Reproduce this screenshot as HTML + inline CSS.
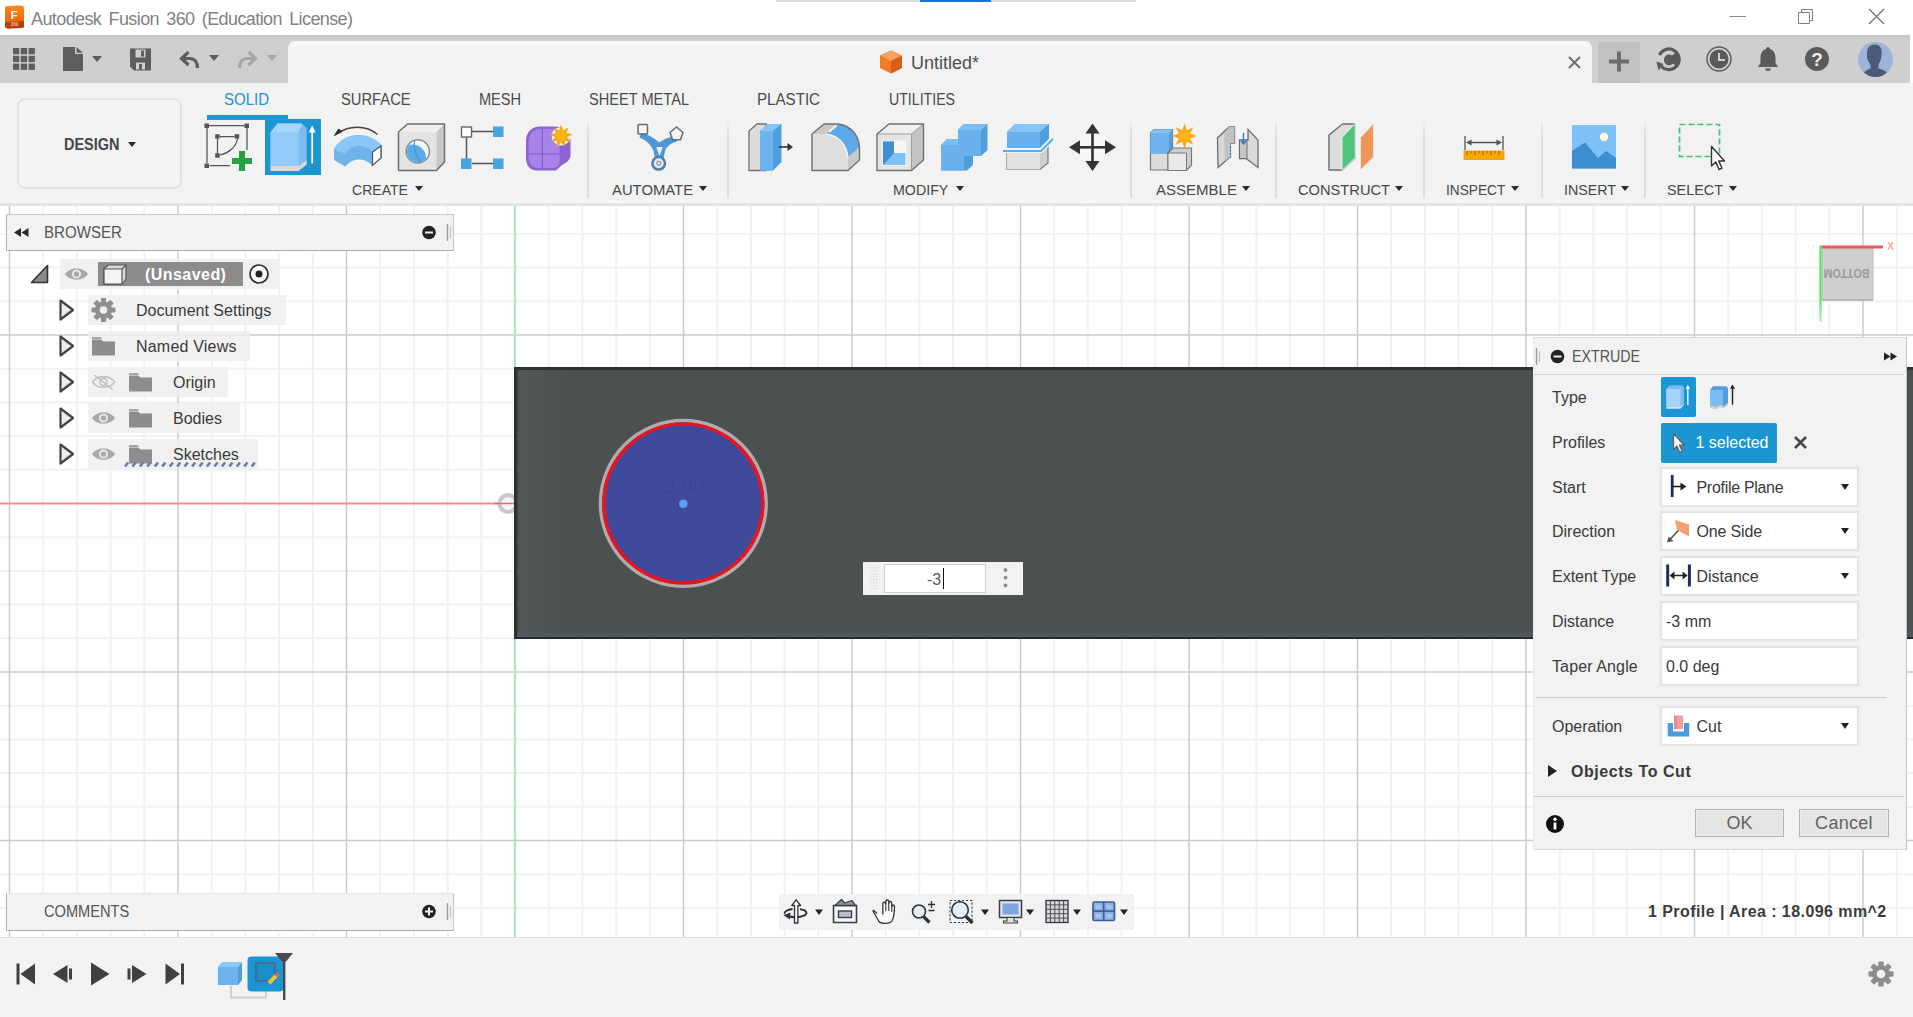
<!DOCTYPE html>
<html lang="en">
<head>
<meta charset="utf-8">
<title>Autodesk Fusion 360 (Education License)</title>
<style>
*{box-sizing:border-box;margin:0;padding:0}
html,body{width:1913px;height:1017px;overflow:hidden;background:#fff}
body{position:relative;font-family:"Liberation Sans",Arial,sans-serif;color:#3c3c3c}
.abs{position:absolute}
.t{position:absolute;white-space:nowrap;line-height:1}
svg{position:absolute;overflow:visible}
/* title bar */
#titlebar{position:absolute;left:0;top:0;width:1913px;height:35px;background:#fff}
#graybar{position:absolute;left:0;top:35px;width:1910px;height:48px;background:#cfcfcf}
#graybar:before{content:"";position:absolute;left:0;top:0;width:100%;height:5px;background:linear-gradient(#c6c6c6,#cfcfcf)}
#doctab{position:absolute;left:288px;top:41px;width:1304px;height:43px;background:linear-gradient(#f6f6f6 0,#f6f6f6 4px,#f2f2f2 6px,#f2f2f2 100%);border-radius:7px 7px 0 0}
#toolbar{position:absolute;left:0;top:83px;width:1913px;height:121px;background:linear-gradient(#f2f2f2 0,#f2f2f2 117px,#f6f6f6 118px,#f6f6f6 100%)}
#tbshadow{position:absolute;left:0;top:203px;width:1913px;height:5px;background:linear-gradient(#e9e9e9 0,#e2e2e2 25%,#e4e4e4 60%,#f8f8f8 100%)}
.tab{position:absolute;top:92px;font-size:16px;line-height:16px;color:#4a4a4a;white-space:nowrap;transform-origin:0 0}
.grp{position:absolute;top:182px;font-size:15.500px;line-height:15.500px;color:#484848;white-space:nowrap;transform-origin:0 0}
.ga{position:absolute;top:186px;width:0;height:0;border-left:4px solid transparent;border-right:4px solid transparent;border-top:5px solid #2a2a2a}
.sep{position:absolute;top:120px;width:2px;height:78px;background:linear-gradient(rgba(220,220,220,0) 0,#dedede 12px,#dedede 100%)}
/* canvas */
#canvas{position:absolute;left:0;top:206px;width:1913px;height:731px;background:#fff;overflow:hidden}
#bottombar{position:absolute;left:0;top:937px;width:1913px;height:80px;background:#f2f2f2;border-top:1px solid #dcdcdc}
/* browser */
.phead{position:absolute;background:#f2f2f2;border:1px solid;border-color:#cacaca #c4c4c4 #adadad #b6b6b6}
.rowbg{position:absolute;height:30px;background:rgba(238,238,238,.85)}
.lbl{position:absolute;font-size:16px;line-height:16px;color:#3a3a3a;white-space:nowrap}
/* dialog */
#dlg{position:absolute;left:1533px;top:337px;width:374px;height:513px;background:#f2f2f2;border:1px solid;border-color:#d8d8d8 #c4c4c4 #d8d8d8 #ececec}
.dl{position:absolute;left:18px;font-size:16px;line-height:16px;color:#3a3a3a;white-space:nowrap}
.dd{position:absolute;left:127px;width:197px;height:38px;background:#fff;border:1px solid #e0e0e0;box-shadow:0 0 0 1.500px #e8e8e8}
.dd span{position:absolute;left:34.500px;top:11px;font-size:16px;line-height:16px;color:#3a3a3a;white-space:nowrap}
.dd i{position:absolute;right:8.500px;top:15px;width:0;height:0;border-left:4.5px solid transparent;border-right:4.5px solid transparent;border-top:6px solid #222}
.btn{position:absolute;top:470px;height:28px;background:#e5e5e5;border:1px solid #b2b2b2;box-shadow:inset 0 0 0 1px #ededed;font-size:18px;line-height:27px;text-align:center;color:#626262}
</style>
</head>
<body>
<!-- ===== TITLE BAR ===== -->
<div id="titlebar">
  <div class="abs" style="left:776px;top:0;width:360px;height:2px;background:#dcdcdc"></div>
  <div class="abs" style="left:920px;top:0;width:71px;height:2px;background:#1a73d2"></div>
  <svg style="left:4px;top:5px" width="21" height="24" viewBox="0 0 21 24">
    <defs><linearGradient id="fg" x1="0" y1="0" x2="0" y2="1"><stop offset="0" stop-color="#ff8a1c"/><stop offset="1" stop-color="#e2560a"/></linearGradient></defs>
    <path d="M3 1 L17 0.5 Q20 0.5 20 3 L20 21 Q20 23.5 17 23 L4 23.5 Q1 23.5 1 20 L1 4 Q1 1 3 1Z" fill="url(#fg)"/>
    <path d="M1 17 L20 16 L20 21 Q20 23.5 17 23 L4 23.5 Q1 23.5 1 20Z" fill="#b9400a"/>
    <text x="10" y="13.5" font-family="Liberation Sans,sans-serif" font-weight="700" font-size="11" fill="#fff" text-anchor="middle">F</text>
    <text x="10.5" y="21.3" font-family="Liberation Sans,sans-serif" font-weight="700" font-size="4.5" fill="#f6b98c" text-anchor="middle">360</text>
  </svg>
  <div class="t" style="left:31px;top:10px;font-size:18px;letter-spacing:-.6px;word-spacing:2.900px;color:#828282">Autodesk Fusion 360 (Education License)</div>
  <!-- window controls -->
  <svg style="left:1725px;top:5px" width="170" height="26" viewBox="0 0 170 26" fill="none" stroke="#7a7a7a" stroke-width="1">
    <path d="M4.500 11.500H21" stroke="#8a8a8a"/>
    <path d="M73.500 7.500H84.500V18.500H73.500Z M76.500 7.500V4.500H87.500V15.500H84.500" stroke="#808080"/>
    <path d="M144 4L159 19M159 4L144 19" stroke="#6e6e6e" stroke-width="1.200"/>
  </svg>
</div>
<!-- ===== GRAY QUICK BAR ===== -->
<div id="graybar"></div>
<div id="doctab"></div>
<svg style="left:0;top:35px" width="300" height="48" viewBox="0 0 300 48" fill="#5d5d5d">
  <!-- app grid -->
  <g>
    <rect x="13" y="13" width="6.300" height="6.300"/><rect x="20.800" y="13" width="6.300" height="6.300"/><rect x="28.600" y="13" width="6.300" height="6.300"/>
    <rect x="13" y="20.800" width="6.300" height="6.300"/><rect x="20.800" y="20.800" width="6.300" height="6.300"/><rect x="28.600" y="20.800" width="6.300" height="6.300"/>
    <rect x="13" y="28.600" width="6.300" height="6.300"/><rect x="20.800" y="28.600" width="6.300" height="6.300"/><rect x="28.600" y="28.600" width="6.300" height="6.300"/>
  </g>
  <!-- file -->
  <path d="M63 12H75V19H83V36H63Z M76.500 12L83 17.800H76.500Z"/>
  <path d="M92 21H102L97 27Z"/>
  <!-- save -->
  <path d="M130 13.500H151V35.500H134L130 31.500Z" />
  <rect x="135.500" y="14.500" width="10" height="8" fill="#cfcfcf"/><rect x="141" y="15.500" width="3" height="6" fill="#5d5d5d"/>
  <rect x="136" y="27.500" width="9" height="7" fill="#cfcfcf"/><rect x="139" y="29" width="3" height="6" fill="#5d5d5d"/>
  <!-- undo -->
  <path d="M188.500 17L181.500 23.500L188.500 30M182 23.500H189.500C195 23.500 197.500 27.500 197.500 33" fill="none" stroke="#5d5d5d" stroke-width="3.200"/>
  <path d="M209 20H219L214 26Z"/>
  <!-- redo (disabled) -->
  <g fill="#a6a6a6"><path d="M248.500 17L255.500 23.500L248.500 30M255 23.500H247.500C242 23.500 239.500 27.500 239.500 33" fill="none" stroke="#a6a6a6" stroke-width="3.200"/>
  <path d="M267 20H277L272 26Z"/></g>
</svg>
<!-- doc tab content -->
<svg style="left:878px;top:49px" width="26" height="26" viewBox="0 0 26 26">
  <path d="M13 1.500L24 6.500V19L13 24.500L2 19V6.500Z" fill="#f47c20"/>
  <path d="M13 1.500L24 6.500L13 12L2 6.500Z" fill="#fba35c"/>
  <path d="M13 12L24 6.500V19L13 24.500Z" fill="#d9601a"/>
</svg>
<div class="t" style="left:911px;top:54px;font-size:18px;color:#4f4f4f">Untitled*</div>
<svg style="left:1568px;top:56px" width="13" height="13" viewBox="0 0 13 13" stroke="#6a6a6a" stroke-width="1.800" fill="none"><path d="M1 1L12 12M12 1L1 12"/></svg>
<div class="abs" style="left:1598px;top:42px;width:42px;height:41px;background:#c1c1c1;border-radius:3px 3px 0 0"></div>
<svg style="left:1598px;top:35px" width="315" height="48" viewBox="0 0 315 48">
  <path d="M11 26.500H31M21 16.500V36.500" stroke="#6c6c6c" stroke-width="4" fill="none"/>
  <!-- extensions/job status -->
  <g transform="translate(71,24)">
    <path d="M-7.500 7.500A10.300 10.300 0 1 0 -9.500 -4" fill="none" stroke="#5a5a5a" stroke-width="3.200"/>
    <path d="M-12.500 2.500L-5.500 5L-10.500 11.500Z" fill="#5a5a5a"/>
    <path d="M8 -7.500L3 -3.500C0 -6 -5 -4 -5 1C-5 6 1 8 4 4.500L8.500 8C12 3 12 -3 8 -7.500Z" fill="#5a5a5a"/>
  </g>
  <!-- clock -->
  <g transform="translate(121,24)">
    <circle r="12" fill="none" stroke="#5a5a5a" stroke-width="1.400"/>
    <circle r="9.500" fill="#5a5a5a"/>
    <path d="M0 -6V1H6" stroke="#cfcfcf" stroke-width="2" fill="none"/>
  </g>
  <!-- bell -->
  <g transform="translate(170,24)" fill="#5a5a5a">
    <path d="M0 -12C1.500 -12 2 -11 2 -10C6 -9 7.500 -5 7.500 -1V4L10 8H-10L-7.500 4V-1C-7.500 -5 -6 -9 -2 -10C-2 -11 -1.500 -12 0 -12Z"/>
    <path d="M-3 9.500H3C3 11 1.500 12 0 12S-3 11 -3 9.500Z"/>
  </g>
  <!-- help -->
  <g transform="translate(219,24)">
    <circle r="12" fill="#5a5a5a"/>
    <text x="0" y="6.500" text-anchor="middle" font-family="Liberation Sans,sans-serif" font-weight="700" font-size="19" fill="#efefef">?</text>
  </g>
  <!-- avatar -->
  <g transform="translate(277.500,24.500)">
    <defs><clipPath id="avc"><circle r="17.500"/></clipPath></defs>
    <circle r="17.500" fill="#9db4d6"/>
    <g clip-path="url(#avc)">
      <path d="M-1 -15C5 -15 7 -10 6 -5C6 0 4 3 3 5V9C8 10 12 12 14 18H-14C-12 12 -8 10 -5 9V5C-7 3 -9 -1 -8.500 -6C-8.500 -11 -6 -15 -1 -15Z" fill="#4a5a78"/>
    </g>
  </g>
</svg>
<!-- ===== TOOLBAR ===== -->
<div id="toolbar"></div>
<div id="tbshadow"></div>
<div class="tab" style="left:224px;transform:scaleX(0.938);color:#1b96d3">SOLID</div>
<div class="tab" style="left:341px;transform:scaleX(0.921);">SURFACE</div>
<div class="tab" style="left:479px;transform:scaleX(0.909);">MESH</div>
<div class="tab" style="left:589px;transform:scaleX(0.912);">SHEET METAL</div>
<div class="tab" style="left:757px;transform:scaleX(0.945);">PLASTIC</div>
<div class="tab" style="left:889px;transform:scaleX(0.884);">UTILITIES</div>
<div class="abs" style="left:207px;top:114.500px;width:81px;height:5px;background:#1b96d3"></div>
<div class="abs" style="left:265px;top:119px;width:56px;height:56px;background:#1b96d3"></div>
<!-- DESIGN button -->
<div class="abs" style="left:17px;top:98px;width:165px;height:91px;border:2px solid #e2e2e2;border-radius:8px;background:#f3f3f3"></div>
<div class="t" style="left:63.500px;top:137px;font-size:16px;font-weight:700;color:#474747;transform:scaleX(.905);transform-origin:0 0">DESIGN</div>
<div class="abs" style="left:128px;top:142px;width:0;height:0;border-left:4px solid transparent;border-right:4px solid transparent;border-top:5px solid #2a2a2a"></div>
<!-- separators -->
<div class="sep" style="left:587px"></div><div class="sep" style="left:727px"></div><div class="sep" style="left:1130px"></div>
<div class="sep" style="left:1275px"></div><div class="sep" style="left:1423px"></div><div class="sep" style="left:1541px"></div><div class="sep" style="left:1644px"></div>
<!-- group labels -->
<div class="grp" style="left:352.0px;transform:scaleX(0.907)">CREATE</div><i class="ga" style="left:415px"></i>
<div class="grp" style="left:612.0px;transform:scaleX(0.957)">AUTOMATE</div><i class="ga" style="left:699px"></i>
<div class="grp" style="left:893.0px;transform:scaleX(0.918)">MODIFY</div><i class="ga" style="left:956px"></i>
<div class="grp" style="left:1156.0px;transform:scaleX(0.969)">ASSEMBLE</div><i class="ga" style="left:1242px"></i>
<div class="grp" style="left:1297.5px;transform:scaleX(0.946)">CONSTRUCT</div><i class="ga" style="left:1395px"></i>
<div class="grp" style="left:1446.0px;transform:scaleX(0.883)">INSPECT</div><i class="ga" style="left:1511px"></i>
<div class="grp" style="left:1563.5px;transform:scaleX(0.919)">INSERT</div><i class="ga" style="left:1621px"></i>
<div class="grp" style="left:1667.0px;transform:scaleX(0.928)">SELECT</div><i class="ga" style="left:1729px"></i>
<!-- ===== TOOL ICONS (CREATE / AUTOMATE) ===== -->
<svg style="left:0;top:83px" width="730" height="120" viewBox="0 83 730 120">
  <!-- create sketch -->
  <g stroke="#555" stroke-width="1.250" fill="none">
    <path d="M209 125.500H244.500M207 128V163M247 128V150M209.500 165.500H230"/>
    <path d="M220 136.500H234.500M217.500 139V153M220 155C229 153 236 147 237.500 139"/>
  </g>
  <g fill="#555"><rect x="204.500" y="123.500" width="4.500" height="4.500"/><rect x="244.500" y="123.500" width="4.500" height="4.500"/><rect x="204.500" y="163.500" width="4.500" height="4.500"/>
  <rect x="215.200" y="134.200" width="4.500" height="4.500"/><rect x="234.700" y="134.200" width="4.500" height="4.500"/><rect x="215.200" y="153.200" width="4.500" height="4.500"/></g>
  <path d="M239 151H245V158H252V164H245V171H239V164H232V158H239Z" fill="#25a244"/>
  <!-- extrude (selected) -->
  <path d="M270.500 132.500L277.500 123.500H302L306.700 128V160L298.600 166H270.500Z" fill="#7dbcf0"/>
  <path d="M270.500 132.500H298.600V166H270.500Z" fill="#93cbf7"/>
  <path d="M270.500 132.500L277.500 123.500H302L298.600 132.500Z" fill="#a6d6fb"/>
  <path d="M270.500 166H298.600L306.700 160V164.500L298.600 171H270.500Z" fill="#dcd8d6"/>
  <path d="M312.200 163.500V131" stroke="#fff" stroke-width="1.700"/><path d="M308.700 132.500L312.200 125.500L315.700 132.500Z" fill="#fff"/>
  <!-- revolve -->
  <path d="M334 149C344 132 368 130 382 146V158L372.500 165.500C364 157 352 158 345.500 166.500L334 160Z" fill="#6fb3ea"/>
  <path d="M334 149C344 132 368 130 382 146L372.500 152C364 143 352 144 345.500 154Z" fill="#8ac6f6"/>
  <path d="M372.500 152L381 146V158L372.500 165.500Z" fill="#fff" stroke="#555" stroke-width="1.200"/>
  <path d="M338 133.500C348 125.500 366 124.500 377.500 134.500" stroke="#444" stroke-width="1.400" fill="none"/><path d="M334.500 135.500L342 131.500L338.500 129Z" fill="#333" stroke="#333"/>
  <!-- hole -->
  <path d="M398.500 132L407.500 124H444.500V162L436.500 170.500H398.500Z" fill="#e3e3e3"/>
  <path d="M398.500 132L407.500 124H444.500L436.500 132Z" fill="#efefef"/>
  <path d="M436.500 132L444.500 124V162L436.500 170.500Z" fill="#c9c9c9"/>
  <path d="M398.500 132L407.500 124H444.500V162L436.500 170.500H398.500Z" fill="none" stroke="#6c6c6c" stroke-width="1.500" stroke-linejoin="round"/>
  <clipPath id="hc"><circle cx="417.800" cy="151.400" r="10.800"/></clipPath>
  <circle cx="417.800" cy="151.400" r="11.600" fill="#f7f7f7" stroke="#8a8a8a" stroke-width="1.400"/>
  <g clip-path="url(#hc)"><circle cx="412.500" cy="158" r="13.500" fill="#5aaae8"/><path d="M414.500 141C413.500 148 416 157 421 162" stroke="#4a98dc" stroke-width="1.200" fill="none"/></g>
  <!-- pattern -->
  <g stroke="#555" stroke-width="1.500" fill="none"><path d="M472 131.500H493M466.500 137V159M472 163.500H493"/></g>
  <rect x="461.500" y="127" width="10" height="10" fill="#fff" stroke="#666" stroke-width="1.400"/>
  <rect x="493" y="126.500" width="10.500" height="10.500" fill="#45a3e6"/><rect x="461" y="158.500" width="10.500" height="10.500" fill="#45a3e6"/><rect x="493" y="158.500" width="10.500" height="10.500" fill="#45a3e6"/>
  <!-- create form -->
  <path d="M526 141C526 132 532 126.500 540 126.500H556C564 127 570.500 133 570.500 141V155C570.500 160 566 163 562 165L556 170.500H538C530 170.500 526 166 526 158Z" fill="#8d63d2"/>
  <path d="M528.500 142C528.500 134 533.500 129 541 129H552C556.500 129 559.500 132 559.500 136V161C559.500 165.500 556 168 552 168H540C533 168 528.500 164 528.500 157Z" fill="#a884ea"/>
  <path d="M528.500 154H559.500M542.300 129V168" stroke="#7d55c4" stroke-width="1.100" fill="none"/>
  <circle cx="561.100" cy="136.200" r="9.300" fill="#f2f2f2"/>
  <path d="M561.1 124.4L563.2 130.6L568.7 127.2L566.3 133.2L572.7 134.2L567.0 137.2L571.3 142.1L565.0 140.8L565.1 147.3L561.1 142.2L557.1 147.3L557.2 140.8L550.9 142.1L555.2 137.2L549.5 134.2L555.9 133.2L553.5 127.2L559.0 130.6Z" fill="#f7a614"/>
  <circle cx="561.100" cy="136.200" r="5.200" fill="#fdb515"/>
  <!-- automate -->
  <path d="M641 132.500C648 134 654 138 659.300 142.500C664 139 669 137 675.500 136L677 141.500C670.500 143 666.500 146.500 665 151L663.500 158.500H655L653.500 151C651.500 145 646.500 140.500 639.500 137.500Z" fill="#4d97d4"/>
  <path d="M656.300 147H662.800L659.500 156Z" fill="#eef2f6"/>
  <rect x="638" y="124.500" width="9.500" height="9.500" rx="1" fill="#f5f5f5" stroke="#5f6a74" stroke-width="1.500"/>
  <path d="M676.500 127L683 132.500L680.500 139.800H672.500L670 132.500Z" fill="#f5f5f5" stroke="#5f6a74" stroke-width="1.500" stroke-linejoin="round"/>
  <circle cx="658.700" cy="163.300" r="6.300" fill="#e8e8e8" stroke="#4a80b0" stroke-width="2.500"/><circle cx="658.700" cy="163.300" r="2" fill="none" stroke="#777" stroke-width="1"/>
</svg>
<!-- ===== TOOL ICONS (MODIFY .. SELECT) ===== -->
<svg style="left:730px;top:83px" width="1183" height="120" viewBox="730 83 1183 120">
  <!-- press pull -->
  <path d="M749 131L757 124H766V170.500H749Z" fill="#dcdcdc" stroke="#707070" stroke-width="1.300"/>
  <path d="M760 131L768 124H781.500V162L773 170.500H760Z" fill="#4e9ee0"/>
  <path d="M760 131H773V170.500H760Z" fill="#6cb4ee"/>
  <path d="M760 131L768 124H781.500L773 131Z" fill="#86c4f5"/>
  <path d="M779 147H789" stroke="#333" stroke-width="1.600"/><path d="M787.500 143L793 147L787.500 151Z" fill="#333"/>
  <!-- fillet -->
  <path d="M812 134L824 124H838C852 126 859 136 859.500 148V160L848 170.500H812Z" fill="#c9c9c9"/>
  <path d="M812 134H826C840 136 847 146 848 158V170.500H812Z" fill="#dedede"/>
  <path d="M826 134L838 124C852 126 859 136 859.500 147L848 157C847 146 840 136 826 134Z" fill="#5ba9e8"/>
  <path d="M826 134C840 136 847 146 848 158" fill="none" stroke="#f4f4f4" stroke-width="1.400"/>
  <path d="M829 132L836.500 125.500" stroke="#f4f4f4" stroke-width="2.200"/>
  <path d="M812 134L824 124H838C852 126 859 136 859.500 148V160L848 170.500H812Z" fill="none" stroke="#707070" stroke-width="1.400" stroke-linejoin="round"/>
  <!-- shell -->
  <path d="M877 134L889 124H923.500V160L911.500 170.500H877Z" fill="#c4c4c4"/>
  <path d="M877 134L889 124H923.500L911.500 134Z" fill="#efefef"/>
  <path d="M877 134H911.500V170.500H877Z" fill="#e4e4e4"/>
  <path d="M877 134H911.500V170.500M911.500 134L923.500 124" fill="none" stroke="#9a9a9a" stroke-width="1"/>
  <path d="M877 134L889 124H923.500V160L911.500 170.500H877Z" fill="none" stroke="#707070" stroke-width="1.400" stroke-linejoin="round"/>
  <path d="M882 140.500H906.500V166H882Z" fill="#f5f5f5"/>
  <path d="M883 141.500H894V153H905.500V165H883Z" fill="#7fc1f5"/>
  <path d="M883 141.500H894V153L888 160L883 165Z" fill="#3f8fd2"/>
  <!-- combine -->
  <path d="M941 145L947 139H958V130L964 124H987.500V150L981 156H973V165L967 170.500H941Z" fill="#4e9ee0"/>
  <path d="M941 145H964V170.500H941Z M958 130H981V156H964V145H958Z" fill="#68b1ec"/>
  <path d="M941 145L947 139H958V145Z M958 130L964 124H987.500L981 130Z" fill="#7dbef2"/>
  <!-- split body -->
  <path d="M1007 152H1040L1048 146V163L1040 169.500H1007Z" fill="#cfcfcf" stroke="#777" stroke-width="1.200"/>
  <path d="M1007 152H1040V169.500H1007Z" fill="#e2e2e2"/>
  <path d="M1007 132L1015 124H1049V139L1040 149H1007Z" fill="#4e9ee0"/>
  <path d="M1007 132H1040V149H1007Z" fill="#68b1ec"/>
  <path d="M1007 132L1015 124H1049L1040 132Z" fill="#86c4f5"/>
  <path d="M1003 150.500H1041L1053 138.500" stroke="#eef7ff" stroke-width="5" fill="none"/>
  <path d="M1003 151H1041L1053 139" stroke="#5aaaea" stroke-width="2" fill="none"/>
  <!-- move -->
  <rect x="1080.500" y="135.500" width="24" height="24" fill="#f8f8f8"/>
  <g fill="#333"><path d="M1092.500 123.500L1099.500 133.500H1085.500Z M1092.500 171L1099.500 161H1085.500Z M1069 147.300L1080 140.300V154.300Z M1116 147.300L1105 140.300V154.300Z"/>
  <rect x="1091.200" y="130" width="2.600" height="34"/><rect x="1076" y="146" width="33" height="2.600"/></g>
  <!-- new component -->
  <path d="M1150.500 133L1154 129.500H1172.500V170H1150.500Z" fill="#dcdcdc" stroke="#777" stroke-width="1.200"/>
  <path d="M1150.500 133L1154 129.500H1172.500V153.500H1150.500Z" fill="#4e9ee0"/>
  <path d="M1150.500 133H1169V153.500H1150.500Z" fill="#6cb4ee"/>
  <path d="M1150.500 133L1154 129.500H1172.500L1169 133Z" fill="#86c4f5"/>
  <path d="M1168 153L1173 148H1191.500V165L1186.500 170.500H1168Z" fill="#cfcfcf" stroke="#777" stroke-width="1.200"/>
  <path d="M1168 153H1186.500V170.500H1168Z" fill="#e9e9e9" stroke="#777" stroke-width="1"/>
  <circle cx="1184.500" cy="136" r="9.500" fill="#f2f2f2"/>
  <path d="M1184.5 123.6L1186.9 130.3L1193.3 127.2L1190.2 133.6L1196.9 136.0L1190.2 138.4L1193.3 144.8L1186.9 141.7L1184.5 148.4L1182.1 141.7L1175.7 144.8L1178.8 138.4L1172.1 136.0L1178.8 133.6L1175.7 127.2L1182.1 130.3Z" fill="#f7a614"/>
  <circle cx="1184.500" cy="136" r="5.600" fill="#fdb515"/>
  <!-- joint -->
  <path d="M1217.500 138L1229 127H1234.500V143H1230V157L1218 167.500Z" fill="#d8d8d8" stroke="#6e6e6e" stroke-width="1.300"/>
  <path d="M1224 133L1229 127H1234.500V143H1230V157L1225 161Z" fill="#c2c2c2"/>
  <path d="M1248 129.500L1258 140V167.500L1246 158.500H1239.500V140H1248Z" fill="#dadada" stroke="#6e6e6e" stroke-width="1.300"/>
  <path d="M1239.500 140H1247V158.500H1239.500Z" fill="#c6c6c6" stroke="#6e6e6e" stroke-width="1"/>
  <path d="M1243.500 133V143M1240.800 140.500L1243.500 144L1246.200 140.500" stroke="#2d7fc4" stroke-width="1.400" fill="none"/>
  <path d="M1230.500 146V158" stroke="#2d7fc4" stroke-width="1.200" stroke-dasharray="2 1.500"/>
  <!-- construct -->
  <path d="M1329 135L1342.500 124H1355V158L1342 170H1329Z" fill="#dedede" stroke="#6e6e6e" stroke-width="1.400" stroke-linejoin="round"/>
  <path d="M1342 137.500L1355.300 123.300V157.500L1342 170.300Z" fill="#4fc57b" stroke="#dff3e7" stroke-width="1"/>
  <path d="M1360.500 137.500L1373.500 123.800V157L1360.500 170Z" fill="#ee9557" stroke="#f7e3d6" stroke-width="1"/>
  <!-- inspect -->
  <rect x="1463.500" y="150.500" width="41" height="9.500" fill="#f4a60e"/>
  <path d="M1467 151V155M1471 151V153.500M1475 151V155M1479 151V153.500M1483 151V155M1487 151V153.500M1491 151V155M1495 151V153.500M1499 151V155" stroke="#b36d00" stroke-width="1.200"/>
  <path d="M1465 136V150M1503 136V150M1468 142.500H1500" stroke="#555" stroke-width="1.300" fill="none"/>
  <path d="M1466 142.500L1471.500 139.500V145.500Z M1502 142.500L1496.500 139.500V145.500Z" fill="#555"/>
  <!-- insert -->
  <rect x="1572" y="125" width="44" height="43.500" fill="#7cc2f8"/>
  <path d="M1572 151L1585 142.500L1598 158L1606 151L1616 158V168.500H1572Z" fill="#3b8ed0"/>
  <circle cx="1604" cy="137" r="4.200" fill="#fffbd6"/>
  <!-- select -->
  <rect x="1679.500" y="124.500" width="40" height="32" fill="none" stroke="#4bbd7f" stroke-width="1.700" stroke-dasharray="6 3"/>
  <path d="M1711.500 146.500V166L1715.800 162L1719 169.500L1722 168.200L1718.800 161H1724.500Z" fill="#fff" stroke="#333" stroke-width="1.400" stroke-linejoin="round"/>
</svg>
<!-- ===== CANVAS ===== -->
<div id="canvas">
<svg style="left:0;top:0" width="1913" height="731" viewBox="0 0 1913 731" fill="none">
<path d="M43.2 0V731M76.9 0V731M110.6 0V731M144.3 0V731M211.7 0V731M245.4 0V731M279.1 0V731M312.8 0V731M380.2 0V731M413.9 0V731M447.6 0V731M481.3 0V731M548.7 0V731M582.4 0V731M616.1 0V731M649.8 0V731M717.2 0V731M750.9 0V731M784.6 0V731M818.3 0V731M885.7 0V731M919.4 0V731M953.1 0V731M986.8 0V731M1054.2 0V731M1087.9 0V731M1121.6 0V731M1155.3 0V731M1222.7 0V731M1256.4 0V731M1290.1 0V731M1323.8 0V731M1391.2 0V731M1424.9 0V731M1458.6 0V731M1492.3 0V731M1559.7 0V731M1593.4 0V731M1627.1 0V731M1660.8 0V731M1728.2 0V731M1761.9 0V731M1795.6 0V731M1829.3 0V731M1896.7 0V731M0 27.9H1913M0 61.6H1913M0 95.3H1913M0 162.7H1913M0 196.4H1913M0 230.1H1913M0 263.8H1913M0 331.2H1913M0 364.9H1913M0 398.6H1913M0 432.3H1913M0 499.7H1913M0 533.4H1913M0 567.1H1913M0 600.8H1913M0 668.2H1913M0 701.9H1913" stroke="#f2f2f2" stroke-width="2"/>
<path d="M9.5 0V731M178.0 0V731M346.5 0V731M683.5 0V731M852.0 0V731M1020.5 0V731M1189.0 0V731M1357.5 0V731M1526.0 0V731M1694.5 0V731M1863.0 0V731M0 129.0H1913M0 466.0H1913M0 634.5H1913" stroke="#cbcbcb" stroke-width="1.500"/>
<path d="M515.0 0V731" stroke="#a2f2ae" stroke-width="2.200"/>
<path d="M0 297.5H1913" stroke="#f08c8c" stroke-width="1.800"/>
<circle cx="508" cy="297.5" r="10.500" fill="#c9c9c9"/><circle cx="508" cy="297.5" r="6.500" fill="#f4f4f4"/>
<path d="M494 297.5H514" stroke="#e86a6a" stroke-width="1.500"/>
</svg>
<!-- body, sketch circle, input (coordinates are canvas-relative: page y - 206) -->
<div class="abs" style="left:514px;top:161px;width:1399px;height:272px;background:#4b5050;border:3px solid #2d3233;border-right:0;border-bottom:2px solid #242b2d;background-image:linear-gradient(0deg,rgba(82,92,97,.75) 0,rgba(78,86,90,.5) 5px,rgba(75,80,80,0) 8px),linear-gradient(90deg,#3f4445 0,#525757 2px,#505555 18px,#4b5050 50px,#4b5050 100%)"></div>
<svg style="left:0;top:0" width="1913" height="731" viewBox="0 206 1913 731">
  <ellipse cx="920" cy="490" rx="100" ry="66" fill="#4c5151"/>
  <circle cx="683.300" cy="503.400" r="82.900" fill="none" stroke="#b3aaae" stroke-width="3.400"/>
  <circle cx="683.300" cy="503.400" r="79.500" fill="#3f4a9b" stroke="#ea1420" stroke-width="3.400"/>
  <text x="684" y="493" text-anchor="middle" font-family="Liberation Sans,sans-serif" font-size="21" fill="#3a4593">3.00</text>
  <circle cx="683.300" cy="503.800" r="4.300" fill="#5d9ff0"/>
</svg>
<!-- floating input -->
<div class="abs" style="left:863px;top:356px;width:160px;height:33px;background:#f2f2f2"></div>
<div class="abs" style="left:884px;top:358px;width:102px;height:29px;background:#fff;border:1px solid #cfcfcf"></div>
<div class="t" style="left:927px;top:366px;font-size:16px;color:#5a5a5a">-3</div>
<div class="abs" style="left:942.500px;top:362px;width:1.500px;height:20.500px;background:#111"></div>
<svg style="left:863px;top:356px" width="160" height="33" viewBox="0 0 160 33">
  <g fill="#8a8a8a"><circle cx="142.5" cy="8" r="1.9"/><circle cx="142.5" cy="15.7" r="1.9"/><circle cx="142.5" cy="23.4" r="1.9"/></g>
  <g stroke="#dcdcdc" stroke-width="1.500" stroke-dasharray="1.500 1.500"><path d="M7.500 5V28M10.500 5V28M13.500 5V28"/></g>
</svg>
<!-- view cube -->
<svg style="left:1800px;top:30px" width="113" height="110" viewBox="1800 236 113 110">
  <rect x="1822" y="248" width="51" height="52" fill="#cfcfcf"/>
  <rect x="1822" y="248" width="51" height="52" fill="none" stroke="#bdbdbd" stroke-width="1"/>
  <path d="M1822 300H1873" stroke="#b0b0b0" stroke-width="1.500"/>
  <path d="M1820 247H1883" stroke="#f0565c" stroke-width="3"/>
  <defs><linearGradient id="gfade" x1="0" y1="0" x2="0" y2="1"><stop offset="0.7" stop-color="#6fe36f"/><stop offset="1" stop-color="#b9f5b9"/></linearGradient></defs><rect x="1819.200" y="246" width="2.600" height="76" fill="url(#gfade)"/>
  <text x="1890.500" y="250" text-anchor="middle" font-family="Liberation Sans,sans-serif" font-size="10" font-weight="700" fill="#f5a3a3">X</text>
  <text transform="translate(1846.500,273) rotate(180)" text-anchor="middle" y="4.500" font-family="Liberation Sans,sans-serif" font-size="13" font-weight="700" fill="#9b9b9b" textLength="46" lengthAdjust="spacingAndGlyphs">BOTTOM</text>
</svg>
</div><!-- /canvas -->
<!-- ===== BROWSER PANEL ===== -->
<div class="phead" style="left:6px;top:214px;width:448px;height:37px"></div>
<svg style="left:6px;top:214px" width="448" height="37" viewBox="0 0 448 37">
  <path d="M8 18.500L15 14V23Z M15.500 18.500L22.500 14V23Z" fill="#2a2a2a"/>
  <circle cx="423" cy="18.500" r="6.800" fill="#222"/><rect x="419" y="17.500" width="8" height="2" fill="#f0f0f0"/>
  <path d="M441.500 10V27" stroke="#9a9a9a" stroke-width="1.400"/><path d="M444.500 13V24" stroke="#c4c4c4" stroke-width="1.200"/>
</svg>
<div class="t" style="left:44px;top:225px;font-size:16px;color:#555;transform:scaleX(.943);transform-origin:0 0">BROWSER</div>
<!-- row backgrounds -->
<div class="rowbg" style="left:60px;top:259px;width:220px"></div>
<div class="rowbg" style="left:88px;top:295px;width:198px"></div>
<div class="rowbg" style="left:88px;top:331px;width:162px"></div>
<div class="rowbg" style="left:88px;top:367px;width:140px"></div>
<div class="rowbg" style="left:88px;top:403px;width:152px"></div>
<div class="rowbg" style="left:88px;top:439px;width:170px"></div>
<div class="abs" style="left:98px;top:262px;width:145px;height:24px;background:#8c8c8c"></div>
<svg style="left:0;top:255px" width="300" height="220" viewBox="0 255 300 220">
  <defs>
    <g id="eye"><path d="M-11.500 0C-7 -7.500 7 -7.500 11.500 0C7 7.500 -7 7.500 -11.500 0Z" fill="#a8a8a8"/><circle r="4.600" fill="#e6e6e6"/><circle r="2.600" fill="#a8a8a8"/></g>
    <g id="fold"><path d="M-11.500 -9H-2V-7H-11.500Z" fill="#a6a6a6"/><path d="M-11.500 -6.500H-2.500L0 -4.500H11.500V9.500H-11.500Z" fill="#8d8d8d"/></g>
    <path id="tri" d="M-5 -9.500L7.500 0L-5 9.500Z" fill="#ececec" stroke="#444" stroke-width="2.200" stroke-linejoin="round"/>
  </defs>
  <!-- root row -->
  <path d="M47.500 265.500V282.500H31.500Z" fill="#8b8b8b" stroke="#333" stroke-width="1.600" stroke-linejoin="round"/>
  <use href="#eye" x="76.500" y="274"/>
  <path d="M104 269L108 265H126V279L122 284H104Z" fill="#d9d9d9" stroke="#555" stroke-width="1.200"/>
  <path d="M104 269H122V284H104Z" fill="#f4f4f4" stroke="#555" stroke-width="1.200"/>
  <path d="M122 269L126 265" stroke="#555" stroke-width="1.200"/>
  <circle cx="259" cy="274" r="9" fill="#fbfbfb" stroke="#2c2c2c" stroke-width="1.700"/><circle cx="259" cy="274" r="3.500" fill="#222"/>
  <!-- children -->
  <use href="#tri" x="65.500" y="310"/><use href="#tri" x="65.500" y="346"/><use href="#tri" x="65.500" y="382"/><use href="#tri" x="65.500" y="418"/><use href="#tri" x="65.500" y="454"/>
  <!-- gear -->
  <g transform="translate(103.500,310)" fill="#8f8f8f">
    <g id="gt"><rect x="-2.600" y="-12" width="5.200" height="24" rx="1"/></g>
    <use href="#gt" transform="rotate(45)"/><use href="#gt" transform="rotate(90)"/><use href="#gt" transform="rotate(135)"/>
    <circle r="8.600"/><circle r="3.800" fill="#efefef"/>
  </g>
  <use href="#fold" x="103.500" y="346"/>
  <!-- hidden eye -->
  <g transform="translate(103.500,382)" fill="none" stroke="#bdbdbd" stroke-width="1.500"><path d="M-11 0C-7 -7 7 -7 11 0C7 7 -7 7 -11 0Z"/><circle r="3.500"/><path d="M-9 -7L9 7.500"/></g>
  <use href="#fold" x="140.500" y="382"/>
  <use href="#eye" x="103.500" y="418"/><use href="#fold" x="140.500" y="418"/>
  <use href="#eye" x="103.500" y="454"/><use href="#fold" x="140.500" y="454"/>
  <path d="M125.0 466.5L128.2 462.5M132.4 466.5L135.6 462.5M139.9 466.5L143.1 462.5M147.3 466.5L150.5 462.5M154.8 466.5L158.0 462.5M162.2 466.5L165.4 462.5M169.7 466.5L172.9 462.5M177.2 466.5L180.3 462.5M184.6 466.5L187.8 462.5M192.1 466.5L195.2 462.5M199.5 466.5L202.7 462.5M206.9 466.5L210.1 462.5M214.4 466.5L217.6 462.5M221.9 466.5L225.1 462.5M229.3 466.5L232.5 462.5M236.8 466.5L239.9 462.5M244.2 466.5L247.4 462.5M251.7 466.5L254.8 462.5" stroke="#6b7ba6" stroke-width="2.600"/>
</svg>
<div class="lbl" style="left:145px;top:267px;color:#fff;font-weight:700;letter-spacing:.45px">(Unsaved)</div>
<div class="lbl" style="left:136px;top:303px">Document Settings</div>
<div class="lbl" style="left:136px;top:339px;letter-spacing:.2px">Named Views</div>
<div class="lbl" style="left:173px;top:375px">Origin</div>
<div class="lbl" style="left:173px;top:411px">Bodies</div>
<div class="lbl" style="left:173px;top:447px">Sketches</div>
<!-- ===== COMMENTS ===== -->
<div class="phead" style="left:6px;top:893px;width:448px;height:38px;border-top-color:#e4e4e4"></div>
<svg style="left:6px;top:893px" width="448" height="38" viewBox="0 0 448 38">
  <circle cx="423" cy="18.500" r="6.800" fill="#222"/><rect x="419" y="17.500" width="8" height="2" fill="#f0f0f0"/><rect x="422" y="14.500" width="2" height="8" fill="#f0f0f0"/>
  <path d="M441.500 10V27" stroke="#9a9a9a" stroke-width="1.400"/><path d="M444.500 13V24" stroke="#c4c4c4" stroke-width="1.200"/>
</svg>
<div class="t" style="left:43.500px;top:904px;font-size:16px;color:#555;transform:scaleX(.914);transform-origin:0 0">COMMENTS</div>
<!-- ===== NAV BAR ===== -->
<div class="abs" style="left:779px;top:894px;width:355px;height:36px;background:#f2f2f2"></div>
<svg style="left:779px;top:894px" width="355" height="36" viewBox="779 894 355 36">
  <defs><path id="dn" d="M-4 -2.500H4L0 3Z" fill="#222"/></defs>
  <!-- orbit -->
  <path d="M800 909.200C806.500 910 808.500 913.500 804 915.600C799.500 917.600 792 917.500 788.500 916.300" fill="none" stroke="#2f3338" stroke-width="2"/>
  <path d="M792.500 909C787 909.800 783.500 911.800 785 914" fill="none" stroke="#2f3338" stroke-width="1.800"/>
  <path d="M794.500 923V905.500H791.800L796.200 899.800L800.600 905.500H797.900V923Z" fill="#fafafa" stroke="#2f3338" stroke-width="1.300" stroke-linejoin="round"/>
  <path d="M783.500 915.200L790.500 912.500L790 919.500Z" fill="#2f3338"/>
  <use href="#dn" x="819" y="912"/>
  <!-- look at -->
  <path d="M833.500 905.500H856.500V922.500H833.500Z" fill="#f6f6f6" stroke="#3a3f46" stroke-width="1.600"/>
  <rect x="838.500" y="911" width="13" height="6.500" fill="#b8c0cc" stroke="#3a3f46" stroke-width="1.400"/>
  <path d="M835 905.500L841.500 899.500L844.500 903L852 900.500L855.500 905.500Z" fill="#8e949c" stroke="#3a3f46" stroke-width="1.300" stroke-linejoin="round"/>
  <!-- pan hand -->
  <path d="M877 913.500C874 910 872.500 909.500 873.500 912L879 921.500C881 924 890 924 892 921C894 917 894.500 910 894.500 906.500C894 904.500 892 904.500 891.800 906.500V903C891.500 901 889 901 888.800 903V901.500C888.500 899.500 886 899.500 885.800 901.500V903.500C885.500 901.800 883 901.800 882.800 903.800V914.500" fill="#fafafa" stroke="#2f3338" stroke-width="1.300" stroke-linejoin="round"/>
  <path d="M885.800 903V911M888.800 903V911M891.800 906V912" stroke="#2f3338" stroke-width="1.100"/>
  <!-- zoom -->
  <circle cx="919" cy="911.500" r="6.500" fill="#e6edf3" stroke="#2f3338" stroke-width="1.600"/>
  <path d="M923.500 916.500L929.500 922.500" stroke="#2f3338" stroke-width="3.200"/>
  <path d="M928 904.500H935M931.500 901V908M928.500 910.500H934.500" stroke="#2f3338" stroke-width="1.300"/>
  <!-- zoom window -->
  <rect x="950" y="900.500" width="22" height="22" fill="none" stroke="#3a3f46" stroke-width="1.100" stroke-dasharray="2.200 1.800"/>
  <circle cx="960" cy="910" r="8.300" fill="#e6edf3" stroke="#2f3338" stroke-width="1.600"/>
  <path d="M966 916.500L972.500 923" stroke="#2f3338" stroke-width="3.400"/>
  <use href="#dn" x="985" y="912"/>
  <!-- display -->
  <rect x="999.500" y="900.500" width="22" height="17" fill="#dde6f0" stroke="#3a3f46" stroke-width="1.500"/>
  <rect x="1002.500" y="903.500" width="16" height="11" fill="#7fa6dc"/>
  <path d="M1007 918V921H1003.500V923H1017.500V921H1014V918" fill="#e2e2e2" stroke="#3a3f46" stroke-width="1.100"/>
  <use href="#dn" x="1030" y="912"/>
  <!-- grid -->
  <rect x="1046" y="900.500" width="22" height="22" fill="#d9d9d9" stroke="#2f3338" stroke-width="1.300"/>
  <path d="M1050.400 900.500V922.500M1054.800 900.500V922.500M1059.200 900.500V922.500M1063.600 900.500V922.500M1046 904.900H1068M1046 909.300H1068M1046 913.700H1068M1046 918.100H1068" stroke="#4a4f56" stroke-width="1"/>
  <use href="#dn" x="1077" y="912"/>
  <!-- viewports -->
  <rect x="1093" y="902" width="21.500" height="18.500" rx="1.500" fill="#8db1e4" stroke="#3b5f9a" stroke-width="1.700"/>
  <path d="M1103.700 902V920.500M1093 911.200H1114.500" stroke="#3b5f9a" stroke-width="1.700"/>
  <g fill="#a9c6ee"><rect x="1096" y="905" width="5" height="3.500"/><rect x="1106.500" y="905" width="5" height="3.500"/><rect x="1096" y="914.200" width="5" height="3.500"/><rect x="1106.500" y="914.200" width="5" height="3.500"/></g>
  <use href="#dn" x="1124" y="912"/>
</svg>
<div class="t" style="left:1648px;top:904px;font-size:16px;font-weight:700;color:#3c3c3c;letter-spacing:.43px">1 Profile | Area : 18.096 mm^2</div>
<!-- ===== TIMELINE BAR ===== -->
<div id="bottombar"></div>
<svg style="left:0;top:938px" width="1913" height="79" viewBox="0 938 1913 79">
  <g fill="#404040">
    <path d="M16.500 963.500H19.500V984.500H16.500Z M35 963.500V984.500L20.500 974Z"/>
    <path d="M53 974L67.500 965V983Z M69 968.500H72V979.500H69Z"/>
    <path d="M91 962.500L109.500 974L91 985.500Z"/>
    <path d="M146.500 974L132 965V983Z M127.500 968.500H130.500V979.500H127.500Z"/>
    <path d="M181 963.500H184V984.500H181Z M165.500 963.500V984.500L180 974Z"/>
  </g>
  <!-- timeline features -->
  <path d="M231 986V997.500H266V986" fill="none" stroke="#cdcdcd" stroke-width="2"/>
  <path d="M218 967L222 962.500H242V980L238 985H218Z" fill="#4f9fde"/>
  <path d="M218 967H238V985H218Z" fill="#6cb4ee"/><path d="M218 967L222 962.500H242L238 967Z" fill="#8cc8f6"/>
  <rect x="247.500" y="956.500" width="36" height="35" rx="4" fill="#1b96d3"/>
  <path d="M256 963H275V981H256Z" fill="#1a8fca" stroke="#3f6f92" stroke-width="2.200"/>
  <path d="M267.500 981.500L274.500 974.500L277.500 977.500L270.500 984.500Z" fill="#f1c232"/><path d="M274.500 974.500L276.500 972.500L279.500 975.500L277.500 977.500Z" fill="#e06666"/>
  <path d="M275 953H293L286 961.500H282Z" fill="#4a4a4a"/><rect x="283" y="960" width="2.400" height="40" fill="#4a4a4a"/>
  <!-- settings gear -->
  <g transform="translate(1881,974)" fill="#8d8d8d">
    <g id="gt2"><rect x="-2.700" y="-12.500" width="5.400" height="25" rx="1"/></g>
    <use href="#gt2" transform="rotate(45)"/><use href="#gt2" transform="rotate(90)"/><use href="#gt2" transform="rotate(135)"/>
    <circle r="9"/><circle r="4.300" fill="#f2f2f2"/>
  </g>
</svg>
<!-- ===== EXTRUDE DIALOG ===== -->
<div id="dlg">
<div class="abs" style="left:0;top:1px;width:370px;height:509px">
  <div class="abs" style="left:0;top:35px;width:370px;height:1px;background:#d6d6d6"></div>
  <svg style="left:0;top:0" width="370" height="36" viewBox="0 0 370 36">
    <path d="M2.500 9V26" stroke="#9a9a9a" stroke-width="1.400"/><path d="M5.500 12V23" stroke="#c4c4c4" stroke-width="1.200"/>
    <circle cx="23.500" cy="17.500" r="6.800" fill="#222"/><rect x="19.500" y="16.500" width="8" height="2" fill="#f0f0f0"/>
    <path d="M350 13.500L356.500 17.500L350 21.500Z M356.500 13.500L363 17.500L356.500 21.500Z" fill="#222"/>
  </svg>
  <div class="t" style="left:38px;top:10px;font-size:16px;color:#555;transform:scaleX(.891);transform-origin:0 0">EXTRUDE</div>
  <div class="dl" style="top:51px">Type</div>
  <div class="dl" style="top:96px">Profiles</div>
  <div class="dl" style="top:141px">Start</div>
  <div class="dl" style="top:185px">Direction</div>
  <div class="dl" style="top:230px">Extent Type</div>
  <div class="dl" style="top:275px">Distance</div>
  <div class="dl" style="top:320px;letter-spacing:.12px">Taper Angle</div>
  <div class="dl" style="top:380px">Operation</div>
  <!-- type buttons -->
  <div class="abs" style="left:127px;top:38px;width:35px;height:40px;background:#1b96d3;border-radius:2px"></div>
  <svg style="left:127px;top:38px" width="100" height="41" viewBox="0 0 100 41">
    <g transform="translate(0,1.500) scale(.88)"><path d="M6 12L9.500 8H24L26 10V28L22 32H6Z" fill="#7dbcf0"/><path d="M6 12H22V32H6Z" fill="#a5d4fa"/><path d="M6 32H22L26 28V30L22 34.500H6Z" fill="#e0e0e0"/>
    <path d="M30.500 30V11" stroke="#fff" stroke-width="1.500"/><path d="M28 12L30.500 7L33 12Z" fill="#fff"/></g>
    <g transform="translate(-1,1.300) scale(1,.88)"><path d="M50 13L53 9H66L68 11V28L64 32L60 30L56 33L50 31Z" fill="#4e9ee0"/><path d="M50 13H63V31L60 29.500L56 32.500L50 30.500Z" fill="#7dbcf0"/>
    <path d="M50 31L56 33L60 30L64 32L68 28V30.500L64 34.500L60 32.500L56 35.500L50 33.500Z" fill="#d0d0d0"/>
    <path d="M72.500 30V11" stroke="#222" stroke-width="1.400"/><path d="M70 12L72.500 7L75 12Z" fill="#222"/></g>
  </svg>
  <!-- profiles -->
  <div class="abs" style="left:127px;top:83.500px;width:116px;height:40px;background:#1b96d3;border-radius:2px"></div>
  <svg style="left:127px;top:83px" width="160" height="41" viewBox="0 0 160 41">
    <path transform="translate(0.500,1) scale(.96)" d="M12.500 11V27.500L16 24L19 30.500L21.500 29.300L18.600 23H23.500Z" fill="#f4f4f4" stroke="#6a5a55" stroke-width="1.200" stroke-linejoin="round"/>
    <path d="M134 15L145 26M145 15L134 26" stroke="#484848" stroke-width="2.600"/>
  </svg>
  <div class="t" style="left:161.500px;top:96px;font-size:16px;color:#fff">1 selected</div>
  <!-- dropdowns -->
  <div class="dd" style="top:129px"><span style="letter-spacing:-.3px">Profile Plane</span><i></i></div>
  <div class="dd" style="top:173px"><span style="letter-spacing:-.15px">One Side</span><i></i></div>
  <div class="dd" style="top:218px"><span>Distance</span><i></i></div>
  <div class="dd" style="top:263px"><span style="left:4px">-3 mm</span></div>
  <div class="dd" style="top:308px"><span style="left:4px">0.0 deg</span></div>
  <div class="dd" style="top:368px"><span>Cut</span><i></i></div>
  <svg style="left:127px;top:130px" width="40" height="280" viewBox="0 0 40 280">
    <path d="M11.200 6V28" stroke="#1f2f5c" stroke-width="2.800"/><path d="M12 17.500H21" stroke="#222" stroke-width="1.600"/><path d="M19.500 13.500L25.500 17.500L19.500 21.500Z" fill="#222"/>
    <g transform="translate(2,-1.500)"><path d="M6 73L17 61" stroke="#555" stroke-width="1.700"/><path d="M4 75L10.500 73.500L5.500 69Z" fill="#555"/><path d="M12 52.500L26 57V69L14 62.500Z" fill="#f2a272"/></g>
    <path d="M6.700 95.500V117.500M28.400 95.500V117.500" stroke="#1f2f5c" stroke-width="3"/><path d="M11 106.500H24" stroke="#222" stroke-width="1.500"/><path d="M8.500 106.500L13.500 102.500V110.500Z M26.600 106.500L21.600 102.500V110.500Z" fill="#222"/>
    <path d="M6.700 254V267.400H28.200V254H23V262.500H12V254Z" fill="#4a9be0"/><rect x="13" y="246.600" width="9" height="13.500" fill="#f0a0a4"/><path d="M13 246.600H16V260H13Z" fill="#e88a90"/>
  </svg>
  <div class="abs" style="left:2px;top:358px;width:351px;height:1px;background:#c9c9c9"></div>
  <div class="abs" style="left:14px;top:426px;width:0;height:0;border-top:6px solid transparent;border-bottom:6px solid transparent;border-left:9px solid #222"></div>
  <div class="t" style="left:37px;top:425px;font-size:16px;font-weight:700;color:#3a3a3a;letter-spacing:.55px">Objects To Cut</div>
  <div class="abs" style="left:0;top:457px;width:370px;height:1px;background:#cdcdcd"></div>
  <svg style="left:11px;top:475px" width="20" height="20" viewBox="0 0 20 20"><circle cx="10" cy="10" r="9" fill="#111"/><rect x="8.600" y="8.500" width="2.800" height="7" fill="#fff"/><circle cx="10" cy="5.300" r="1.700" fill="#fff"/></svg>
  <div class="btn" style="left:161px;width:89px">OK</div>
  <div class="btn" style="left:265px;width:90px;letter-spacing:.3px">Cancel</div>
</div>
</div>
</body>
</html>
